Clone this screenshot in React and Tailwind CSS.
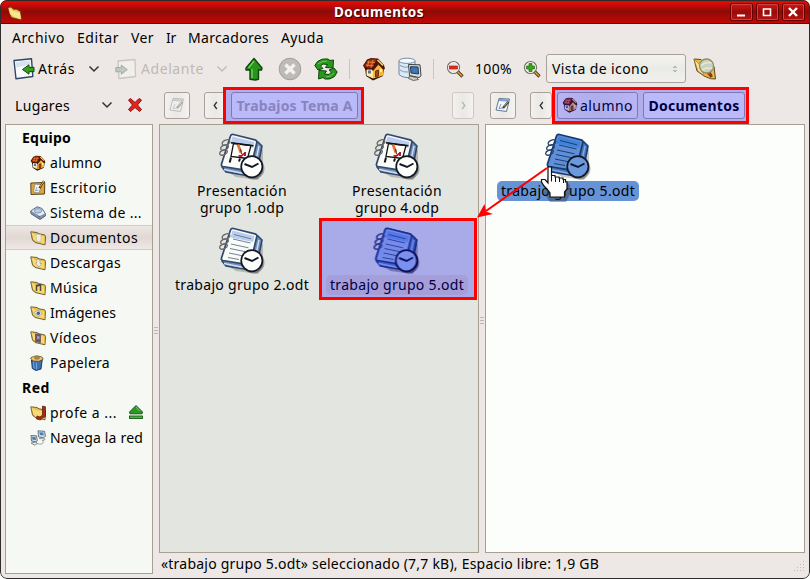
import React, { useLayoutEffect, useRef, useState } from "react";

/* Text run whose letter spacing adapts so that it spans `w` pixels. */
function Txt({ w, className = "", children }) {
  const ref = useRef(null);
  const [ls, setLs] = useState(0);
  useLayoutEffect(() => {
    const width = ref.current.getBoundingClientRect().width;
    setLs((w - width) / String(children).length);
  }, [w, children]);
  return (
    <span ref={ref} className={"inline-block whitespace-pre " + className} style={{ letterSpacing: ls + "px" }}>
      {children}
    </span>
  );
}

function House({ className }) {
  return (
    <svg viewBox="0 0 24 24" className={className}>
      <path d="M3 10l1 9 7 4.500 10-4.500 1-9L12 6z" fill="#2d1206" />
      <path d="M4.500 11v7.500L11 21.500V11z" fill="#ffe98f" />
      <path d="M11 12l4-4.500 6 3v8L11 21.500z" fill="#f5b83b" />
      <path d="M1 8.500L5 2.500 9 1l7 .5 6 6.500 1 4-2 .5-4.500-5-5 6-8-.5z" fill="#4d1506" />
      <path d="M2.500 8.500L6 3.500 9.500 2l5 .5-4.500 8.500-6.500-1z" fill="#a52c10" />
      <path d="M5 5l8 .5M4 8l7.500.8M7 3.500L5.500 9.500M11 3L9 10.500" stroke="#e88a32" strokeWidth=".9" />
      <path d="M15.500 3l5.500 5.500" stroke="#f9d26a" strokeWidth="1.600" />
      <rect x="5.500" y="13" width="4" height="4" fill="#617684" stroke="#fff" strokeWidth=".8" />
      <path d="M13.500 20v-6l3-1v6z" fill="#a84516" stroke="#5e210b" strokeWidth=".8" />
      <path d="M18 12h2v3h-2z" fill="#fff3a2" />
    </svg>
  );
}

function Folder({ kind, className = "w-4 h-4" }) {
  return (
    <svg viewBox="0 0 16 16" className={className}>
      <path d="M.8 1.800L7 2.500l2 1.300 5.500 1 1 1.500-.5 8.500-3.500-.8-6.500-1.500L2.500 10z" fill="#e9bf45" stroke="#66552a" strokeWidth=".9" strokeLinejoin="round" />
      <path d="M1 2l4.500 3L14 6.500l.5 7.300-8-2L3 9.500z" fill="#f8d976" />
      <path d="M1 2l1.700 7.500L5 12" fill="none" stroke="#8a7233" strokeWidth=".7" />
      {kind === "doc" && <path d="M6 4l5 .8v7L6.500 11z" fill="#f0efdf" stroke="#bdb796" strokeWidth=".6" />}
      {kind === "down" && <path d="M6.500 4.500l3.500.5v3.500h2L9 12 5.500 8h1.500z" fill="#eef0ee" stroke="#9c9d98" strokeWidth=".7" />}
      {kind === "music" && <path d="M6.500 11V5.500l4-1v6.500M6.500 6l4-1" fill="none" stroke="#4f4840" strokeWidth="1.500" />}
      {kind === "image" && (
        <g>
          <path d="M4 7.500L8 5l4.500 3.500-4.500 3z" fill="#e5e7e2" stroke="#8a8f8c" strokeWidth=".6" />
          <circle cx="8.300" cy="8.300" r="1.700" fill="#426590" />
        </g>
      )}
      {kind === "video" && (
        <g>
          <path d="M5.500 4l5 .5v8l-5-1z" fill="#67567a" stroke="#4b4048" strokeWidth=".6" />
          <path d="M7 6l2.500.3v3L7 9z" fill="#ad91c9" />
        </g>
      )}
      {kind === "net" && <path d="M12.500 1l3 .8v9.700l-3 1.500-2 2-4-1 .5-3 3 1 2.500-2z" fill="#a52c13" stroke="#591507" strokeWidth=".7" />}
    </svg>
  );
}

/* Large tilted folder used in the title bar. */
function TitleFolder() {
  return (
    <svg viewBox="0 0 16 16" className="mt-[3px] h-4 w-4">
      <path d="M1 2.500l3-.5 3 2.500 2-.5 4.500 2.500 1 8.500-4-1-6-1.500-1.500-3z" fill="#e9c858" stroke="#6d3712" strokeWidth=".8" strokeLinejoin="round" />
      <path d="M1.500 3L6 6l7 2 .8 6-6-2L3 9z" fill="#fbe591" />
    </svg>
  );
}

function Chevron({ className = "w-3 h-2", stroke = "#333" }) {
  return (
    <svg viewBox="0 0 12 8" className={className}>
      <path d="M1.500 1.500L6 6l4.500-4.500" fill="none" stroke={stroke} strokeWidth="1.500" />
    </svg>
  );
}

function Side({ dir }) {
  return (
    <svg viewBox="0 0 8 12" className="w-[7px] h-[11px]">
      <path d={dir === "left" ? "M5.500 2L2.500 6l3 4" : "M2.500 2l3 4-3 4"} fill="none" stroke={dir === "left" ? "#333" : "#b9b4b0"} strokeWidth="1.500" />
    </svg>
  );
}

function NavIcon({ forward }) {
  return (
    <svg viewBox="0 0 22 22" className="w-[22px] h-[22px]">
      {forward ? (
        <g>
          <path d="M3 3l17-1.500.5 17L4 20.500z" fill="#f1eeec" stroke="#c9c5c1" strokeWidth="1.300" strokeLinejoin="round" />
          <path d="M.8 9.500h5.500V7l6 4.700-6 4.600v-2.500H.8z" fill="#bdc8c2" stroke="#a0a8a3" strokeWidth=".9" />
        </g>
      ) : (
        <g>
          <path d="M1 2.500L18.500.8l1.300 17.700L3 20.800z" fill="#f8fbff" stroke="#304867" strokeWidth="1.400" strokeLinejoin="round" />
          <path d="M2.500 4L17 2.500l.5 4-14 3z" fill="#d5e3f3" />
          <path d="M21 9.300h-5V6.800L9.500 11.500l6.500 4.700v-2.500h5z" fill="#35a319" stroke="#124a0b" />
        </g>
      )}
    </svg>
  );
}

function NotePad({ faded }) {
  return (
    <svg viewBox="0 0 16 16" className={"w-4 h-4 " + (faded ? "opacity-40 grayscale" : "")}>
      <path d="M4 1.500l10.500.5-3 12.500L1 13z" fill="#f4f8fc" stroke="#65768b" />
      <path d="M4 2l10.500.3-.5 2.500-10.500-.8z" fill="#7fa3d0" />
      <path d="M6 7l-2 4.500 4-.5" fill="none" stroke="#7b98b8" />
      <path d="M13.500 4.500L8 11" stroke="#403c35" strokeWidth="2.200" />
      <path d="M13.500 4L9 9.500" stroke="#cfa84d" strokeWidth="1" />
    </svg>
  );
}

function Magnifier({ plus }) {
  return (
    <svg viewBox="0 0 18 18" className="w-[18px] h-[18px]">
      <path d="M11 11l5.500 5.500" stroke="#513719" strokeWidth="3.200" />
      <path d="M12 12l4 4" stroke="#e9a52c" strokeWidth="1.500" />
      <circle cx="7.500" cy="7.500" r="6" fill="#e8e8de" stroke="#75706a" strokeWidth="1.200" />
      <circle cx="7.500" cy="7.500" r="4.900" fill="none" stroke="#f8f9f3" strokeWidth=".8" />
      {plus ? (
        <path d="M6 3.500h3V6h2.500v3H9v2.500H6V9H3.500V6H6z" fill="#3ba41f" stroke="#176112" strokeWidth=".6" />
      ) : (
        <rect x="3.500" y="6" width="8" height="3" fill="#e62b21" stroke="#961711" strokeWidth=".6" />
      )}
    </svg>
  );
}

/* Spiral-bound document with a clock emblem. */
function Book({ kind, tint }) {
  const page = tint ? "#5f8fd8" : "#fafcfa";
  const cover = tint ? "#4676bd" : "#6f8db8";
  const head = tint ? "#3e83dc" : "#b9cdee";
  const edge = tint ? "#173a72" : "#32496b";
  const ink = tint ? "#173661" : "#61728a";
  return (
    <svg viewBox="0 0 48 48" className="w-12 h-12 block">
      <path d="M8 38l10 6 22 3 5-8V17l-3-3-20 22z" fill="#000" opacity=".2" />
      <path d="M13 3l27 6 4 4-5.500 28q-1 3-4 2.500L8 39l-4-5z" fill={cover} stroke={edge} strokeWidth="1.600" strokeLinejoin="round" />
      <path d="M41 13l-5.500 26M6 36.500L28 41" stroke={tint ? "#82a8df" : "#d3deee"} strokeWidth="1.400" fill="none" />
      <path d="M12.500 3q.7-2 3-1.500L37 6.800q2.300.6 1.800 2.700L32.500 36q-.6 2-2.700 1.600L5 33.500q-2-.4-1.500-2.500z" fill={page} stroke={edge} strokeWidth="1.700" />
      <path d="M14.500 3.500L36.500 9l-1.300 6L12.500 10.500z" fill={head} />
      {kind === "odp" ? (
        <g>
          <path d="M15.500 10.500l17.500 2-3.500 13-16.500-2z" fill="#fffefa" stroke="#111" strokeWidth="1.300" />
          <path d="M13 9.700l22.500 3" stroke="#111" strokeWidth="1.500" />
          <path d="M13 24.500l-1.300 5M22 25.500l-1 3" stroke="#111" strokeWidth="2" />
          <path d="M20 11.500l2.800 8" stroke="#e5762d" strokeWidth="2.800" />
          <path d="M22.500 16l1 5" stroke="#5b3a30" strokeWidth="1.200" />
          <path d="M20.500 22.500q2.500 1.500 4-.5t3.500-1.500M27 19v4" fill="none" stroke="#b31d34" strokeWidth="2" />
        </g>
      ) : (
        <path d="M16 7.500l17 4.300M15 12l17.500 4M13 17l17.500 3.800M12 21.500l17 3.500M11 26l13 2.700M10 30.500l11 2" stroke={ink} strokeWidth=".9" />
      )}
      <g fill="none" stroke={tint ? "#24436e" : "#686868"} strokeWidth="1.300">
        <ellipse cx="8" cy="9.500" rx="4" ry="2.400" transform="rotate(-25 8 9.500)" />
        <ellipse cx="6.500" cy="14.500" rx="4" ry="2.400" transform="rotate(-25 6.500 14.500)" />
        <ellipse cx="5.500" cy="19.500" rx="4" ry="2.400" transform="rotate(-25 5.500 19.500)" />
      </g>
      <circle cx="35.500" cy="35.500" r="11" fill="#000" opacity=".3" />
      <circle cx="33.800" cy="33.700" r="10.600" fill={tint ? "#6a99df" : "#fdfdfc"} stroke="#111827" strokeWidth="1.700" />
      <path d="M26.500 31l7.500 3 6.500-3.500" fill="none" stroke="#111827" strokeWidth="1.900" />
    </svg>
  );
}

function File({ kind, tint, lines, label = "" }) {
  return (
    <div className="flex w-[155px] flex-col items-center pt-2">
      <div className="mr-[2px]"><Book kind={kind} tint={tint} /></div>
      <div className={"mr-px flex h-5 w-[142px] flex-col items-center rounded-[5px] leading-[17px] pt-px " + label}>
        {lines.map(([t, w]) => (
          <Txt key={t} w={w}>{t}</Txt>
        ))}
      </div>
    </div>
  );
}

const places = [
  ["alumno", 52, <House className="w-4 h-4" />],
  ["Escritorio", 67, (
    <svg viewBox="0 0 16 16" className="w-4 h-4">
      <path d="M.8 3l14-.5-.3 11.500-13.500.5z" fill="#dca43d" stroke="#5e421b" />
      <path d="M5 4l6.500 1-2.500 8-5.500-1z" fill="#f4f5ef" stroke="#7f8175" strokeWidth=".7" />
      <path d="M7 7l-1.500 4 3-1" fill="none" stroke="#7898bd" strokeWidth=".8" />
      <path d="M14 1L9.500 8" stroke="#3d2a12" strokeWidth="2.200" />
      <path d="M14 1l-4 6" stroke="#f1c04e" />
    </svg>
  )],
  ["Sistema de ...", 92, (
    <svg viewBox="0 0 16 16" className="w-4 h-4">
      <path d="M.7 6L7 1.800l5 1.700 3.300 5V11L10 14.500 1 8.800z" fill="#7d94b1" stroke="#435d7e" strokeWidth=".9" strokeLinejoin="round" />
      <path d="M1.500 6L7 2.500l4.500 1.300 3.300 4.700L9.800 11z" fill="#e9f0f7" />
      <ellipse cx="8" cy="5.800" rx="3.700" ry="2.300" fill="#bacbdd" stroke="#6482a5" strokeWidth=".7" />
      <path d="M8.500 11.500l1.300.5" stroke="#d22" strokeWidth="1.300" />
    </svg>
  )],
  ["Documentos", 88, <Folder kind="doc" />],
  ["Descargas", 71, <Folder kind="down" />],
  ["Música", 48, <Folder kind="music" />],
  ["Imágenes", 66, <Folder kind="image" />],
  ["Vídeos", 47, <Folder kind="video" />],
  ["Papelera", 60, (
    <svg viewBox="0 0 16 16" className="-ml-px mr-px w-4 h-4">
      <path d="M2.500 5l.8 8.500L7 15.500l5-1.500 1.200-9z" fill="#3b70b1" stroke="#183b68" />
      <path d="M4.500 7l.5 6.500M7.500 7.500v7" stroke="#77a6d9" />
      <path d="M1.500 3l3-1.500L8 .8l5 1.200 1.200 2.200L10 6.300 4 6z" fill="#ebc968" stroke="#5c4b2b" strokeWidth=".8" />
      <ellipse cx="8" cy="3" rx="2.600" ry="1.200" fill="#b99548" stroke="#775c34" strokeWidth=".6" />
    </svg>
  )],
];

function Place({ text, w, icon, active, eject }) {
  return (
    <div className={"flex h-[25px] items-center pl-6 " + (active ? "border-y border-[#d5cbc6] bg-linear-to-b from-[#ede7e3] via-[#e1d8d4] to-[#f0e8e5]" : "")}>
      {icon}
      <Txt w={w} className="ml-1">{text}</Txt>
      {eject && (
        <svg viewBox="0 0 16 16" className="ml-[11px] mb-[2px] w-4 h-4">
          <path d="M8 1.500L14.500 8l-.5 1.800H2L1.500 8z" fill="#2b9825" stroke="#145914" strokeLinejoin="round" />
          <path d="M8 3L11.500 7" stroke="#83d163" />
          <rect x="1.500" y="12" width="13" height="2.500" fill="#46b739" stroke="#145914" strokeWidth=".9" />
        </svg>
      )}
    </div>
  );
}

const btn = "flex h-[27px] shrink-0 items-center justify-center rounded-[3px] border border-[#aaa09a] bg-linear-to-r from-[#f3f0ed] via-[#eae9e6] to-[#f5f2f0]";

function WinButton({ children }) {
  return (
    <div className="flex h-[18px] w-[23px] items-center justify-center rounded-[2px] border border-[#630000] bg-linear-to-b from-[#d31713] via-[#970b0b] to-[#bd110f] shadow-[inset_0_0_0_1px_#c9453d]">
      <svg viewBox="0 0 12 12" className="mr-px w-3 h-3" fill="none" stroke="#fff" strokeWidth="2">{children}</svg>
    </div>
  );
}

function Grip() {
  return (
    <div className="flex w-1 flex-col gap-[2px]">
      <i className="h-px bg-[#bdb5af]" /><i className="h-px bg-[#bdb5af]" /><i className="h-px bg-[#bdb5af]" />
    </div>
  );
}

const menus = [["Archivo", 53], ["Editar", 42], ["Ver", 23], ["Ir", 10], ["Marcadores", 81], ["Ayuda", 43]];

export default function App() {
  return (
    <div className="relative flex h-[579px] w-[810px] flex-col overflow-hidden rounded-[7px] bg-[#ede8e5] font-['Noto_Sans','Open_Sans',sans-serif] text-[14px] leading-[17px] text-black">
      <header className="flex h-6 shrink-0 items-center border-b border-[#5b0804] bg-linear-to-b from-[#e30a04] from-10% via-[#8d0b07] via-50% to-[#c40604] pl-[7px] pr-[5px]">
        <TitleFolder />
        <div className="ml-[311px] font-bold text-white [text-shadow:1px_1px_1px_#300]"><Txt w={90} className="text-[13.5px]">Documentos</Txt></div>
        <div className="ml-auto flex gap-[3px]">
          <WinButton><path d="M2 9.500h8" /></WinButton>
          <WinButton><path d="M2.500 3h7v6.500h-7z" strokeWidth="1.600" /></WinButton>
          <WinButton><path d="M2 2l8 8M10 2l-8 8" strokeWidth="2.400" /></WinButton>
        </div>
      </header>

      <nav className="flex h-7 shrink-0 items-center gap-3 pb-[2px] pl-3">
        {menus.map(([t, w]) => <Txt key={t} w={w}>{t}</Txt>)}
      </nav>

      <div className="flex h-[34px] shrink-0 items-center pb-px pl-[13px]">
        <NavIcon />
        <Txt w={37} className="ml-[3px]">Atrás</Txt>
        <Chevron className="ml-[13px] w-3 h-2" />
        <div className="ml-[15px]"><NavIcon forward /></div>
        <Txt w={63} className="ml-1 text-[#bdb9b5]">Adelante</Txt>
        <Chevron className="ml-3 w-3 h-2" stroke="#c1bdb9" />
        <svg viewBox="0 0 20 24" className="ml-[16px] w-5 h-6">
          <path d="M10 1.500L18 11l-.5 2-3-.3v9.500l-3 .8-5.500-.8v-9.500L2 13v-2z" fill="#27951b" stroke="#10450d" strokeWidth="1.400" strokeLinejoin="round" />
          <path d="M10 4l-5.500 7M8 12v9" stroke="#6fd052" strokeWidth="1.500" />
        </svg>
        <svg viewBox="0 0 24 24" className="ml-[14px] w-6 h-6">
          <circle cx="12" cy="12" r="10.800" fill="#bdbab8" stroke="#a19e9b" />
          <path d="M7.500 7.500l9 9M16.500 7.500l-9 9" stroke="#f4f2f1" strokeWidth="3.400" />
        </svg>
        <svg viewBox="0 0 24 24" className="ml-3 w-6 h-6" fill="#28991e" stroke="#0c450b" strokeLinejoin="round">
          <path d="M3.500 4.500Q8 1 14 2l2 1.500L19.500 3l-.5 8-7.500-.5 2-3-4.500-.5-2.500 2 2.500 2.500L4 13 .8 8.500z" />
          <path d="M20.500 19.500Q16 23 11 22l-2-1.500L4.500 22 5 13.500l7.500.5-2 3 4.500.5 2.500-2.500-2.500-2 5-2 3.200 4z" />
          <path d="M4 7q3-3 9-3M20 16q-3 4-8 4" fill="none" stroke="#72ca55" />
        </svg>
        <div className="ml-[11px] h-5 w-px bg-[#cbc4be]" />
        <House className="ml-3 w-6 h-6" />
        <svg viewBox="0 0 24 24" className="ml-3 w-6 h-6">
          <path d="M1 4v13.500q5 4.500 13 2.500l3-3V4z" fill="#dce8f4" stroke="#6b87a4" />
          <ellipse cx="9" cy="3.800" rx="8" ry="2.600" fill="#f5faff" stroke="#7590ac" />
          <path d="M2 8.500q4 2.500 9 1.500M2 13q3 2.500 8 2" fill="none" stroke="#7b9cbe" />
          <path d="M10.500 7.500l11.500.3 1 11-2 1.700-9.500-2z" fill="#dedbd2" stroke="#37404b" strokeLinejoin="round" />
          <path d="M12.500 9.700l7.500.3.500 7-7.500-1z" fill="#3f78b4" stroke="#1f3553" />
          <path d="M11.500 19l7 1.500 2 2-5 1-5-2z" fill="#c8cac3" stroke="#494d4e" strokeWidth=".8" />
        </svg>
        <div className="ml-[11px] h-5 w-px bg-[#cbc4be]" />
        <div className="ml-3"><Magnifier /></div>
        <Txt w={37} className="ml-[11px]">100%</Txt>
        <div className="ml-[11px]"><Magnifier plus /></div>
        <div className="ml-[5px] flex h-[29px] w-[140px] items-center rounded-[3px] border border-[#aaa09a] bg-linear-to-b from-[#f5f3f1] via-[#e9ebe7] to-[#f3f0ee] pl-[5px]">
          <Txt w={97}>Vista de icono</Txt>
          <svg viewBox="0 0 6 8" className="ml-[23px] w-[6px] h-2" fill="none" stroke="#81807d" strokeWidth=".9"><path d="M1.500 3L3 1.300 4.500 3M1.500 5L3 6.700 4.500 5" /></svg>
        </div>
        <svg viewBox="0 0 24 24" className="ml-[7px] w-6 h-6">
          <path d="M1 2l7 .5 2 2 11 5 1.500 12.500-5-.3L11 19l-7-5z" fill="#e9ba43" stroke="#604820" strokeLinejoin="round" />
          <path d="M1 2l5 5 5 11.500-6-4.500z" fill="#ffe694" stroke="#8f7436" strokeWidth=".6" />
          <path d="M16 15l2.500 5" stroke="#61451d" strokeWidth="3" />
          <path d="M14.500 17.500l3-1.500" stroke="#df2b13" strokeWidth="2.500" />
          <circle cx="13.500" cy="9" r="7" fill="#c6d2c6" stroke="#8d8c70" strokeWidth="1.300" />
          <path d="M8 8.500q5-4 10.500-2.500M9 13q4-3 10.500-1.500" fill="none" stroke="#f0e9bd" strokeWidth="1.500" />
        </svg>
      </div>

      <div className="flex h-[38px] shrink-0 items-center pl-[15px]">
        <Txt w={55}>Lugares</Txt>
        <Chevron className="ml-[31px] w-3 h-2" />
        <svg viewBox="0 0 16 16" className="ml-[14px] w-4 h-4">
          <path d="M1.500 3l2-1.500L8 5.500l4-4L14.500 3 10.500 8l4 4.500-2 2L8 10.500l-4.500 4-2-2L5.500 8z" fill="#e3241e" stroke="#8e0f0c" />
        </svg>
        <div className={btn + " ml-[21px] w-[26px]"}><NotePad faded /></div>
        <div className={btn + " ml-[14px] w-[22px]"}><Side dir="left" /></div>
        <div className={btn + " ml-[5px] w-[127px] !bg-none !bg-[#f9f8f8] font-bold text-[#b7afa9]"}><Txt w={116}>Trabajos Tema A</Txt></div>
        <div className={btn + " ml-[94px] w-[22px] !border-[#cec8c3]"}><Side dir="right" /></div>
        <div className={btn + " ml-4 w-[26px]"}><NotePad /></div>
        <div className={btn + " ml-[14px] w-[22px]"}><Side dir="left" /></div>
        <div className={btn + " ml-[5px] w-[81px] !justify-start gap-[2px] pl-1"}><House className="w-4 h-4" /><Txt w={53}>alumno</Txt></div>
        <div className={btn + " ml-[5px] w-[102px] !bg-none !bg-[#f9f8f8] font-bold"}><Txt w={91}>Documentos</Txt></div>
      </div>

      <div className="flex min-h-0 flex-1 pl-[5px]">
        <aside className="h-[450px] w-[148px] shrink-0 border border-[#a89e92] bg-[#f6f9f3]">
          <div className="flex h-[25px] items-center pl-4 font-bold"><Txt w={49}>Equipo</Txt></div>
          {places.map(([t, w, icon]) => <Place key={t} text={t} w={w} icon={icon} active={t === "Documentos"} />)}
          <div className="flex h-[25px] items-center pl-4 font-bold"><Txt w={28}>Red</Txt></div>
          <Place text="profe a ..." w={67} icon={<Folder kind="net" />} eject />
          <Place text="Navega la red" w={93} icon={
            <svg viewBox="0 0 16 16" className="w-4 h-4">
              <path d="M8 .8l6.500.5 1 5-2 1.500-5-1zM1 5.500l5.500.3.8 5-1.500 1L1.500 11z" fill="#d8dde0" stroke="#44556a" strokeWidth=".8" strokeLinejoin="round" />
              <path d="M9.300 2.300l4 .3.5 3-3.800-.5zM2 6.700l3.500.3.5 3-3.500-.3z" fill="#4681bd" />
              <path d="M1 13l5-1 1.500 1.500-3 1.700zM9 8.500l4.500-.5 1.500 1.500-3 1.500" fill="#e7e8e4" stroke="#6c7276" strokeWidth=".8" />
              <path d="M7 13.500q6 2 6.500-2" fill="none" stroke="#8a8f91" strokeWidth=".8" />
            </svg>
          } />
        </aside>
        <div className="w-[6px] shrink-0 pl-px pt-[203px]"><Grip /></div>

        <div className="flex flex-col">
          <div className="flex">
            <section className="h-[429px] w-[320px] border border-[#a89e92] bg-[#e2e5e0] pl-[5px]">
              <div className="flex h-[94px]">
                <File kind="odp" lines={[["Presentación", 90], ["grupo 1.odp", 84]]} />
                <File kind="odp" lines={[["Presentación", 90], ["grupo 4.odp", 84]]} />
              </div>
              <div className="flex">
                <File kind="odt" lines={[["trabajo grupo 2.odt", 134]]} />
                <div className="relative">
                  <File kind="odt" label="bg-[#ddd3cb]" lines={[["trabajo grupo 5.odt", 134]]} />
                  {/* Icon already present in this folder is drawn selected and dimmed */}
                  <div className="absolute left-[52px] top-2 opacity-60"><Book kind="odt" tint /></div>
                </div>
              </div>
            </section>
            <div className="w-[6px] pl-px pt-[193px]"><Grip /></div>
            <section className="h-[429px] w-[320px] border border-[#a89e92] bg-[#fbfefa] pl-[5px]">
              <File kind="odt" tint label="bg-[#6693d5]" lines={[["trabajo grupo 5.odt", 134]]} />
            </section>
          </div>
          <footer className="flex h-[22px] items-center pb-px pl-[2px]">
            <Txt w={438}>«trabajo grupo 5.odt» seleccionado (7,7 kB), Espacio libre: 1,9 GB</Txt>
            <svg viewBox="0 0 12 12" className="ml-auto mt-1 w-3 h-3" fill="#c2bbb5">
              <path d="M10 1h1v1h-1zM7 4h1v1H7zM10 4h1v1h-1zM4 7h1v1H4zM7 7h1v1H7zM10 7h1v1h-1zM1 10h1v1H1zM4 10h1v1H4zM7 10h1v1H7zM10 10h1v1h-1z" />
            </svg>
          </footer>
        </div>
      </div>

      {/* Highlights, drag arrow and pointer above the window */}
      <div className="absolute left-[223px] top-[87px] h-[37px] w-[141px] border-3 border-[#ff0000] bg-[#0000ff]/25" />
      <div className="absolute left-[552px] top-[87px] h-[37px] w-[197px] border-3 border-[#ff0000] bg-[#0000ff]/25" />
      <div className="absolute left-[319px] top-[218px] h-[82px] w-[158px] border-3 border-[#ff0000] bg-[#0000ff]/25" />
      <svg viewBox="0 0 100 70" className="absolute left-[472px] top-[155px] h-[70px] w-[100px]">
        <g transform="translate(69 11)">
          <path d="M8 4h3v9l14 2 4 4v9l-4 8H9l-6-9z" fill="#303030" opacity=".4" />
          <path d="M7 1h3.500v8.500H14V11h4v1h4v1.500h2.500V16H26v7l-2.500 3v5H9v-4l-3-4-3-3-2.500-4v-2.500H4L7 17z" fill="#fff" stroke="#111" strokeWidth="1.200" />
          <path d="M10.500 10v5.500M14.500 11v5M18.500 12v4M22.500 14v3" stroke="#111" />
        </g>
        <path d="M75 13L14 56" stroke="#f00" strokeWidth="2" />
        <path d="M5 62.500L12.500 49l1.500 7.500 7 2.500z" fill="#f00" />
      </svg>
      <div className="pointer-events-none absolute inset-0 rounded-[7px] border border-[#302c2c]" />
    </div>
  );
}
